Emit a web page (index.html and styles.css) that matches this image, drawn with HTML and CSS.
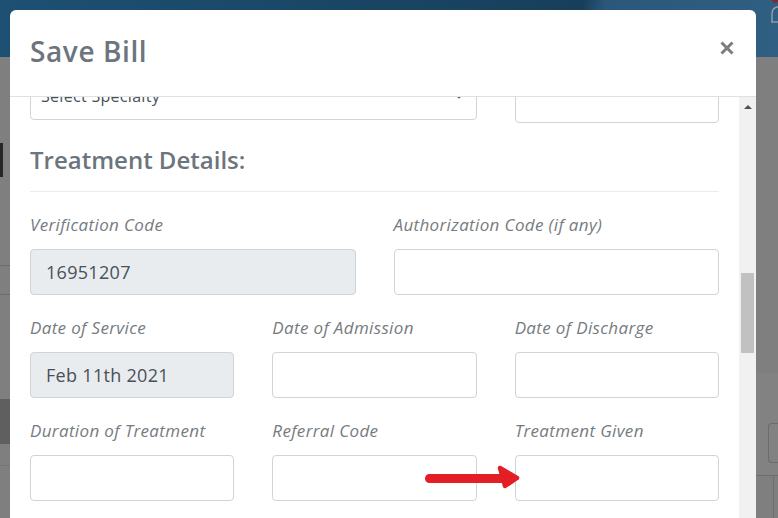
FILE: index.html
```html
<!DOCTYPE html>
<html lang="en">
<head>
<meta charset="utf-8">
<title>Save Bill</title>
<link rel="stylesheet" href="styles.css">
</head>
<body>
<div class="page">
  <header class="navbar">
    <span class="nav-bell">
      <svg width="10" height="22" viewBox="0 0 10 22"><path d="M2 20 L2 12 Q2 6 7 5 Q10 5 10 8" fill="none" stroke="#9aa3ad" stroke-width="1.3"/><path d="M1 20 H10" stroke="#9aa3ad" stroke-width="1.3"/></svg>
      <span class="nav-dot"></span>
    </span>
  </header>
  <div class="page-main">
    <div class="page-left">
      <div class="band b1"></div>
      <div class="band mark"></div>
      <div class="band b2"></div>
      <div class="band b3"></div>
      <div class="band b4"></div>
      <div class="band dark"></div>
      <div class="band b5"></div>
      <div class="band b6"></div>
    </div>
    <div class="page-right">
      <div class="rband r1"></div>
      <div class="rband r2"><div class="rbox"></div></div>
      <div class="rband r3"></div>
    </div>
  </div>
</div>

<div class="backdrop">
  <div class="modal">
    <div class="modal-header">
      <h2 class="modal-title">Save Bill</h2>
      <button class="close" aria-label="Close">
        <svg width="14" height="14" viewBox="0 0 14 14"><path d="M1.5 1.5 L12.5 12.5 M12.5 1.5 L1.5 12.5" stroke="#7d7d7d" stroke-width="3" stroke-linecap="butt"/></svg>
      </button>
    </div>
    <div class="modal-body">
      <div class="scroll-content">
        <div class="scroll-inner">
          <div class="grid3 top-row">
            <div class="select span2">
              <span>Select Specialty</span>
              <svg class="chev" width="10" height="6" viewBox="0 0 10 6"><path d="M1 1 L5 5 L9 1" fill="none" stroke="#666" stroke-width="1.2"/></svg>
            </div>
            <div class="input tall"></div>
          </div>

          <h3 class="section-title">Treatment Details:</h3>
          <hr class="divider">

          <div class="grid2">
            <div class="group">
              <label class="label">Verification Code</label>
              <div class="input disabled">16951207</div>
            </div>
            <div class="group">
              <label class="label">Authorization Code (if any)</label>
              <div class="input"></div>
            </div>
          </div>

          <div class="grid3">
            <div class="group">
              <label class="label">Date of Service</label>
              <div class="input disabled">Feb 11th 2021</div>
            </div>
            <div class="group">
              <label class="label">Date of Admission</label>
              <div class="input"></div>
            </div>
            <div class="group">
              <label class="label">Date of Discharge</label>
              <div class="input"></div>
            </div>
          </div>

          <div class="grid3">
            <div class="group">
              <label class="label">Duration of Treatment</label>
              <div class="input"></div>
            </div>
            <div class="group">
              <label class="label">Referral Code</label>
              <div class="input"></div>
            </div>
            <div class="group">
              <label class="label">Treatment Given</label>
              <div class="input"></div>
            </div>
          </div>
        </div>
      </div>
      <div class="scrollbar">
        <div class="sb-arrow"></div>
        <div class="sb-thumb"></div>
      </div>
    </div>
  </div>
</div>

<svg class="annot-arrow" width="110" height="36" viewBox="0 0 110 36">
  <path d="M9.5 18.5 L86 18.5" stroke="#e31e24" stroke-width="9" stroke-linecap="round"/>
  <path d="M80 8 L97 18 L85 26 Z" fill="#e31e24" stroke="#e31e24" stroke-width="4.5" stroke-linejoin="round"/>
</svg>
</body>
</html>
```
FILE: styles.css
```css
* { box-sizing: border-box; }

html, body {
  margin: 0;
  padding: 0;
}

body {
  position: relative;
  width: 778px;
  height: 518px;
  overflow: hidden;
  background: #7f7f7f;
  font-family: "Open Sans", "Noto Sans", sans-serif;
}

/* ---------- dimmed page underneath ---------- */
.page {
  display: flex;
  flex-direction: column;
  height: 518px;
}

.navbar {
  height: 57px;
  display: flex;
  justify-content: flex-end;
  background: linear-gradient(100deg, #1d5073 0%, #1a4766 40%, #173f5b 74%, #2b587a 77%, #2f5f82 100%);
}

.nav-bell {
  position: relative;
  width: 8px;
  padding-top: 2px;
  overflow: hidden;
}

.nav-dot {
  position: absolute;
  top: -3px;
  right: 0;
  width: 6px;
  height: 6px;
  border-radius: 50%;
  background: #7a2c3a;
}

.page-main {
  flex: 1;
  display: flex;
}

.page-left {
  flex: 1;
  display: flex;
  flex-direction: column;
}

.band { flex: none; }
.b1 { height: 86px; }
.mark { height: 34px; border-left: 3px solid #262626; }
.b2 { height: 89px; border-bottom: 1px solid #6c6c6c; }
.b3 { height: 29px; border-bottom: 1px solid #6c6c6c; }
.b4 { height: 104px; }
.dark { height: 45px; background: #5f5f5f; }
.b5 { height: 22px; border-bottom: 1px solid #747474; }
.b6 { flex: 1; }

.page-right {
  width: 22px;
  display: flex;
  flex-direction: column;
}

.rband { flex: none; }
.r1 { height: 316px; }
.r2 {
  height: 103px;
  background: #828282;
  padding: 50px 0 0 12px;
  border-bottom: 1px solid #6e6e6e;
}
.rbox {
  height: 40px;
  border: 1px solid #6c6c6c;
  border-right: 0;
  border-radius: 4px 0 0 4px;
}
.r3 {
  flex: 1;
  margin-left: 17px;
  border-left: 1px solid #6e6e6e;
}

/* ---------- modal ---------- */
.backdrop {
  position: absolute;
  top: 0;
  left: 0;
  right: 0;
  bottom: 0;
  padding: 10px 22px 0 10px;
}

.modal {
  height: 100%;
  background: #fff;
  border-radius: 6px 6px 0 0;
  display: flex;
  flex-direction: column;
  overflow: hidden;
}

.modal-header {
  flex: none;
  height: 87px;
  display: flex;
  justify-content: space-between;
  align-items: flex-start;
  padding: 25px 22px 0 20px;
  border-bottom: 1px solid #dee2e6;
}

.modal-title {
  margin: 0;
  font-size: 28px;
  line-height: 33.6px;
  font-weight: 600;
  letter-spacing: 0.6px;
  color: #6c757d;
}

.close {
  margin-top: 6px;
  padding: 0;
  border: 0;
  background: transparent;
  width: 14px;
  height: 14px;
  display: flex;
}

.modal-body {
  flex: 1;
  display: flex;
  min-height: 0;
  overflow: hidden;
}

.scroll-content {
  flex: 1;
  padding: 0 20px 0 20px;
  overflow: hidden;
}

.scroll-inner {
  margin-top: -21px;
}

.grid3 {
  display: grid;
  grid-template-columns: repeat(3, 1fr);
  column-gap: 38px;
  align-items: start;
}

.grid2 {
  display: grid;
  grid-template-columns: repeat(2, 1fr);
  column-gap: 38px;
}

.span2 { grid-column: span 2; }

.select {
  height: 44px;
  border: 1px solid #ced4da;
  border-radius: 4px;
  display: flex;
  align-items: center;
  justify-content: space-between;
  padding: 0 12px 5px 10px;
  font-size: 16px;
  letter-spacing: 0.3px;
  color: #495057;
}

.chev { margin-top: 0; }

.input {
  height: 46px;
  border: 1px solid #ced4da;
  border-radius: 4px;
  background: #fff;
  display: flex;
  align-items: center;
  padding: 0 15px;
  font-size: 18px;
  letter-spacing: 0.3px;
  color: #495057;
}

.input.tall { height: 47px; }

.input.disabled { background: #e9ecef; }

.section-title {
  margin: 23px 0 0;
  font-size: 24px;
  line-height: 28.8px;
  font-weight: 600;
  color: #6c757d;
}

.divider {
  margin: 16px 0 21px;
  border: 0;
  border-top: 1px solid #e9ecef;
  height: 0;
}

.group { margin-bottom: 21px; }

.label {
  display: block;
  margin-bottom: 12px;
  font-size: 17px;
  line-height: 24px;
  font-style: italic;
  letter-spacing: 0.35px;
  color: #767b80;
}

/* fake scrollbar */
.scrollbar {
  flex: none;
  width: 17px;
  background: #f1f1f1;
  display: flex;
  flex-direction: column;
  align-items: center;
}

.sb-arrow {
  margin-top: 8px;
  width: 0;
  height: 0;
  border-left: 4px solid transparent;
  border-right: 4px solid transparent;
  border-bottom: 4px solid #505050;
}

.sb-thumb {
  margin-top: 164px;
  width: 13px;
  height: 80px;
  background: #c1c1c1;
}

/* annotation arrow over the form */
.annot-arrow {
  position: absolute;
  left: 420px;
  top: 460px;
}
```
